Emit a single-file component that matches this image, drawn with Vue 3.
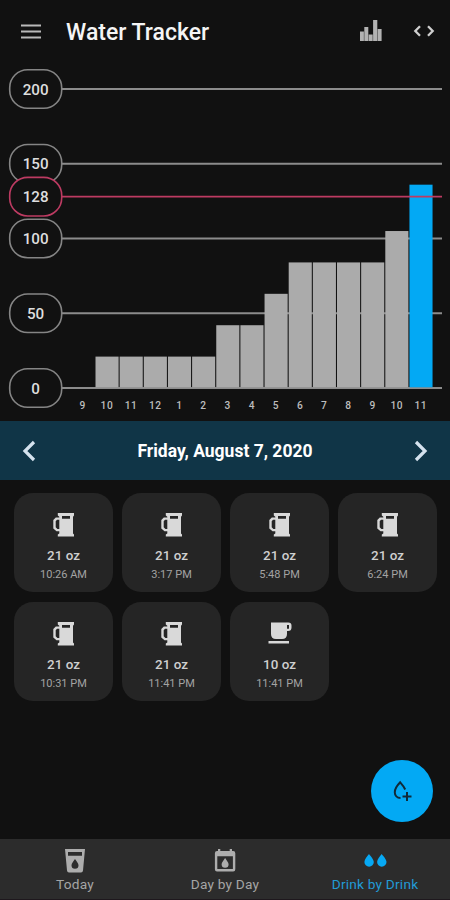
<script setup>
const baseY = 328
const unit = 1.495
const pitch = 24.15
const firstBarX = 95.5

const levelY = (oz) => baseY - oz * unit

const ticks = [200, 150, 100, 50, 0]
const goal = 128
const hours = [9, 10, 11, 12, 1, 2, 3, 4, 5, 6, 7, 8, 9, 10, 11]
const totals = [0, 21, 21, 21, 21, 21, 42, 42, 63, 84, 84, 84, 84, 105, 136]
const bars = hours.map((hour, i) => ({
  hour,
  total: totals[i],
  x: firstBarX + (i - 1) * pitch,
  y: levelY(totals[i]),
  current: i === hours.length - 1,
}))

const drinks = [
  { amount: '21 oz', time: '10:26 AM', type: 'mug' },
  { amount: '21 oz', time: '3:17 PM', type: 'mug' },
  { amount: '21 oz', time: '5:48 PM', type: 'mug' },
  { amount: '21 oz', time: '6:24 PM', type: 'mug' },
  { amount: '21 oz', time: '10:31 PM', type: 'mug' },
  { amount: '21 oz', time: '11:41 PM', type: 'mug' },
  { amount: '10 oz', time: '11:41 PM', type: 'cup' },
]
</script>

<template>
  <div class="app">
    <header class="top">
      <svg class="menu" width="20" height="15" viewBox="0 0 20 15">
        <path d="M0 1.5H20M0 7.5H20M0 13.5H20" stroke="#b9b9b9" stroke-width="2" />
      </svg>
      <h1>Water Tracker</h1>
      <svg class="stats" width="22" height="22" viewBox="0 0 22 22" fill="#b2b2b2">
        <path d="M0 11.5H3.9V21H0zM4.3 7H8.3V21H4.3zM8.7 14.5H12.7V21H8.7zM13.1 0H17.3V21H13.1zM17.7 9H21.6V21H17.7z" />
      </svg>
      <svg width="22" height="12" viewBox="0 0 22 12" fill="none" stroke="#cfcfcf" stroke-width="2.3">
        <path d="M7 1.2 2.3 6l4.7 4.8M15 1.2 19.7 6l-4.7 4.8" />
      </svg>
    </header>

    <svg class="chart" width="450" height="361" viewBox="0 0 450 361">
      <line v-for="t in ticks" :key="t" class="grid" x1="62" x2="442" :y1="levelY(t)" :y2="levelY(t)" />
      <g v-for="(b, i) in bars" :key="i">
        <rect v-if="b.total" :class="b.current ? 'bar current' : 'bar'" :x="b.x" :y="b.y" width="23.1" :height="baseY - b.y - 0.7" />
        <text class="hour" :x="b.x + 11.4" y="348.8">{{ b.hour }}</text>
      </g>
      <g v-for="t in ticks" :key="'l' + t">
        <rect class="pill" x="9.7" :y="levelY(t) - 19.3" width="52" height="38.6" rx="18" />
        <text class="level" x="35.6" :y="levelY(t) + 5.5">{{ t }}</text>
      </g>
      <line class="grid goal" x1="62" x2="442" :y1="levelY(goal)" :y2="levelY(goal)" />
      <rect class="pill goal" x="9.7" :y="levelY(goal) - 19.3" width="52" height="38.6" rx="18" />
      <text class="level" x="35.6" :y="levelY(goal) + 5.5">{{ goal }}</text>
    </svg>

    <div class="date">
      <svg width="14" height="22" viewBox="0 0 14 22"><path d="M12 2 3 11l9 9" /></svg>
      <span>Friday, August 7, 2020</span>
      <svg width="14" height="22" viewBox="0 0 14 22"><path d="M2 2 11 11l-9 9" /></svg>
    </div>

    <main class="drinks">
      <article v-for="(d, i) in drinks" :key="i" class="card">
        <svg v-if="d.type === 'mug'" width="24" height="24" viewBox="0 0 24 24" fill="#d9d9d9">
          <path fill-rule="evenodd" d="M5.8 0H22V2.6L21 3.8V20.6L22 21.5V23.5H5.8V21.5L7.3 20.6V18.3H4.5L1.3 15.5V7L3.8 4.4H7.3V3.8L5.8 2.6zM10 2.9V5.7H18V2.9zM7.3 6.8H5L3.7 8.2V14.2L5.4 16H7.3z" />
        </svg>
        <svg v-else width="24" height="24" viewBox="0 0 24 24" fill="#d9d9d9">
          <path fill-rule="evenodd" d="M3 0.5H20.3Q23.5 0.5 23.5 3.5V5.5Q23.5 9 20 9H19V12Q19 17 14 17H8Q3 17 3 12zM19 3V6.8H21V3zM0.5 18.9H21V21.6H0.5z" />
        </svg>
        <strong>{{ d.amount }}</strong>
        <small>{{ d.time }}</small>
      </article>
    </main>

    <button class="add" aria-label="Add drink">
      <svg width="20" height="22" viewBox="0 0 20 22" fill="none" stroke="#102a38" stroke-width="2">
        <path d="M13.2 9.5C12 6.8 10.2 4.5 8.2 2.3C5.4 5.2 2.8 9 2.8 12.2C2.8 15.6 5 18 8.5 18M15 12V21M10.5 16.5H19.5" />
      </svg>
    </button>

    <nav class="tabs">
      <a class="tab">
        <svg width="22" height="24" viewBox="0 0 22 24" fill="#adadad">
          <path fill-rule="evenodd" d="M1 0H21L19 21.5Q18.8 23.5 17 23.5H5Q3.2 23.5 3 21.5zM4 3V6.8H18V3zM11 10C9.7 12 7.5 14.3 7.5 16.3a3.5 3.5 0 0 0 7 0C14.5 14.3 12.3 12 11 10z" />
        </svg>
        <span>Today</span>
      </a>
      <a class="tab">
        <svg width="22" height="24" viewBox="0 0 22 24" fill="#adadad">
          <path fill-rule="evenodd" d="M4 0H6.3V2H15.7V0H18V2H19.2Q21.3 2 21.3 4.2V20.2Q21.3 22.4 19.2 22.4H3Q0.9 22.4 0.9 20.2V4.2Q0.9 2 3 2H4zM3.3 7.3V20H18.9V7.3zM11.1 9C10 11.2 7.6 13.2 7.6 15.3a3.5 3.5 0 0 0 7 0C14.6 13.2 12.2 11.2 11.1 9z" />
        </svg>
        <span>Day by Day</span>
      </a>
      <a class="tab active">
        <svg width="24" height="24" viewBox="0 0 24 24" fill="#07a9f4">
          <path d="M6 5C4.4 7.3 1.4 10.3 1.4 13a4.7 4.7 0 0 0 9.4 0C10.8 10.3 7.6 7.3 6 5zM18.7 5C17.1 7.3 14.1 10.3 14.1 13a4.7 4.7 0 0 0 9.4 0C23.5 10.3 20.3 7.3 18.7 5z" />
        </svg>
        <span>Drink by Drink</span>
      </a>
    </nav>
  </div>
</template>

<style>
body {
  background: #111;
}
</style>

<style scoped>
.app {
  position: relative;
  width: 450px;
  height: 900px;
  display: flex;
  flex-direction: column;
  background: #111;
  color: #dedede;
  font-family: Roboto, sans-serif;
  overflow: hidden;
}
.top {
  height: 60px;
  flex: none;
  display: flex;
  align-items: center;
  padding: 2px 15px 0 21px;
  box-sizing: border-box;
}
h1 {
  margin: 2px auto 0 25px;
  font-size: 23px;
  font-weight: 500;
  color: #f5f5f5;
}
.stats {
  margin-right: 31px;
}
.chart {
  display: block;
  flex: none;
}
.grid {
  stroke: #8c8c8c;
  stroke-width: 1.8;
}
.bar {
  fill: #ababab;
}
.bar.current {
  fill: #03a9f4;
}
.pill {
  fill: #111;
  stroke: #858585;
  stroke-width: 1.6;
}
.goal {
  stroke: #bd3b62;
}
.level {
  fill: #dedede;
  font-size: 15.2px;
  font-weight: 500;
  text-anchor: middle;
}
.hour {
  fill: #bdbdbd;
  font-size: 10.2px;
  font-weight: 500;
  letter-spacing: 0.5px;
  text-anchor: middle;
}
.date {
  height: 59px;
  flex: none;
  box-sizing: border-box;
  padding: 0 22px;
  display: flex;
  align-items: center;
  justify-content: space-between;
  background: #103547;
  color: #fff;
  font-size: 17.5px;
  font-weight: 700;
}
.date path {
  fill: none;
  stroke: #d5e2ee;
  stroke-width: 3.2;
}
.drinks {
  flex: 1;
  display: grid;
  grid-template-columns: repeat(4, 99px);
  grid-auto-rows: 99px;
  column-gap: 9px;
  row-gap: 9.5px;
  padding: 13px 14px;
}
.card {
  box-sizing: border-box;
  padding-top: 20px;
  border-radius: 19px;
  background: #252525;
  display: flex;
  flex-direction: column;
  align-items: center;
}
.card strong {
  margin-top: 10px;
  font-size: 13.4px;
  line-height: 18px;
  font-weight: 500;
  color: #cfcfcf;
}
.card small {
  margin-top: 2px;
  font-size: 11px;
  line-height: 15px;
  color: #a3a3a3;
}
.add {
  position: absolute;
  left: 371px;
  top: 760px;
  width: 62px;
  height: 62px;
  padding: 0;
  border: 0;
  border-radius: 50%;
  background: #03a9f4;
  display: flex;
  align-items: center;
  justify-content: center;
}
.tabs {
  height: 61px;
  flex: none;
  box-sizing: border-box;
  border-bottom: 1px solid #1e181d;
  display: grid;
  grid-template-columns: repeat(3, 1fr);
  background: #2c2c2c;
}
.tab {
  display: flex;
  flex-direction: column;
  align-items: center;
  padding-top: 10px;
  font-size: 13.7px;
  line-height: 18px;
  letter-spacing: 0.2px;
  color: #a5a5a5;
}
.tab span {
  margin-top: 2px;
}
.tab.active {
  color: #229bd6;
}
</style>
